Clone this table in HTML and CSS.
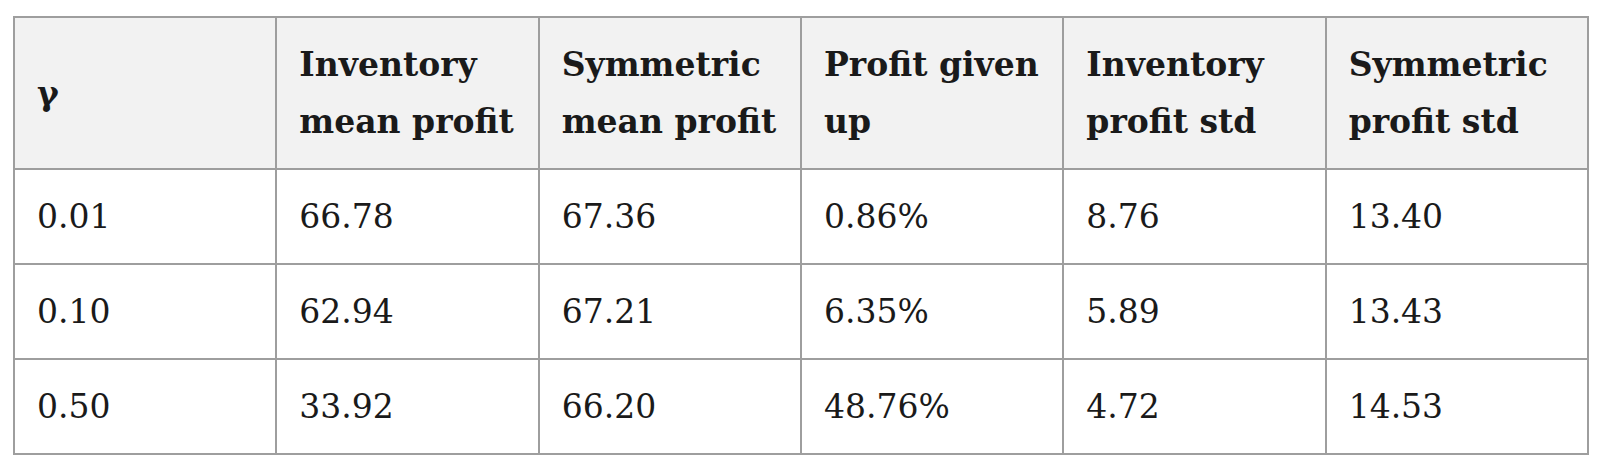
FILE: index.html
```html
<!DOCTYPE html>
<html lang="en">
<head>
<meta charset="utf-8">
<title>Inventory vs Symmetric profit</title>
<link rel="stylesheet" href="styles.css">
</head>
<body>
<div class="wrap">
  <table class="data">
    <thead>
      <tr>
        <th>γ</th>
        <th>Inventory<br>mean profit</th>
        <th>Symmetric<br>mean profit</th>
        <th>Profit given<br>up</th>
        <th>Inventory<br>profit std</th>
        <th>Symmetric<br>profit std</th>
      </tr>
    </thead>
    <tbody>
      <tr><td>0.01</td><td>66.78</td><td>67.36</td><td>0.86%</td><td>8.76</td><td>13.40</td></tr>
      <tr><td>0.10</td><td>62.94</td><td>67.21</td><td>6.35%</td><td>5.89</td><td>13.43</td></tr>
      <tr><td>0.50</td><td>33.92</td><td>66.20</td><td>48.76%</td><td>4.72</td><td>14.53</td></tr>
    </tbody>
  </table>
</div>
</body>
</html>
```

FILE: styles.css
```css
html, body {
  margin: 0;
  padding: 0;
  background: #ffffff;
}

.wrap {
  padding: 16px 11px 0 13px;
}

.data {
  width: 1576px;
  table-layout: fixed;
  border-collapse: separate;
  border-spacing: 0;
  border-left: 2px solid #9e9e9e;
  border-top: 2px solid #9e9e9e;
  font-family: "DejaVu Serif", "Liberation Serif", serif;
  font-size: 33px;
  line-height: 57px;
  color: #1a1a1a;
}

.data th,
.data td {
  padding: 18px 20px 18px 22px;
  border-right: 2px solid #9e9e9e;
  border-bottom: 2px solid #9e9e9e;
  text-align: left;
  vertical-align: middle;
  white-space: nowrap;
}

.data th {
  background: #f2f2f2;
  font-weight: 700;
}

.data td {
  font-weight: 400;
}
```
